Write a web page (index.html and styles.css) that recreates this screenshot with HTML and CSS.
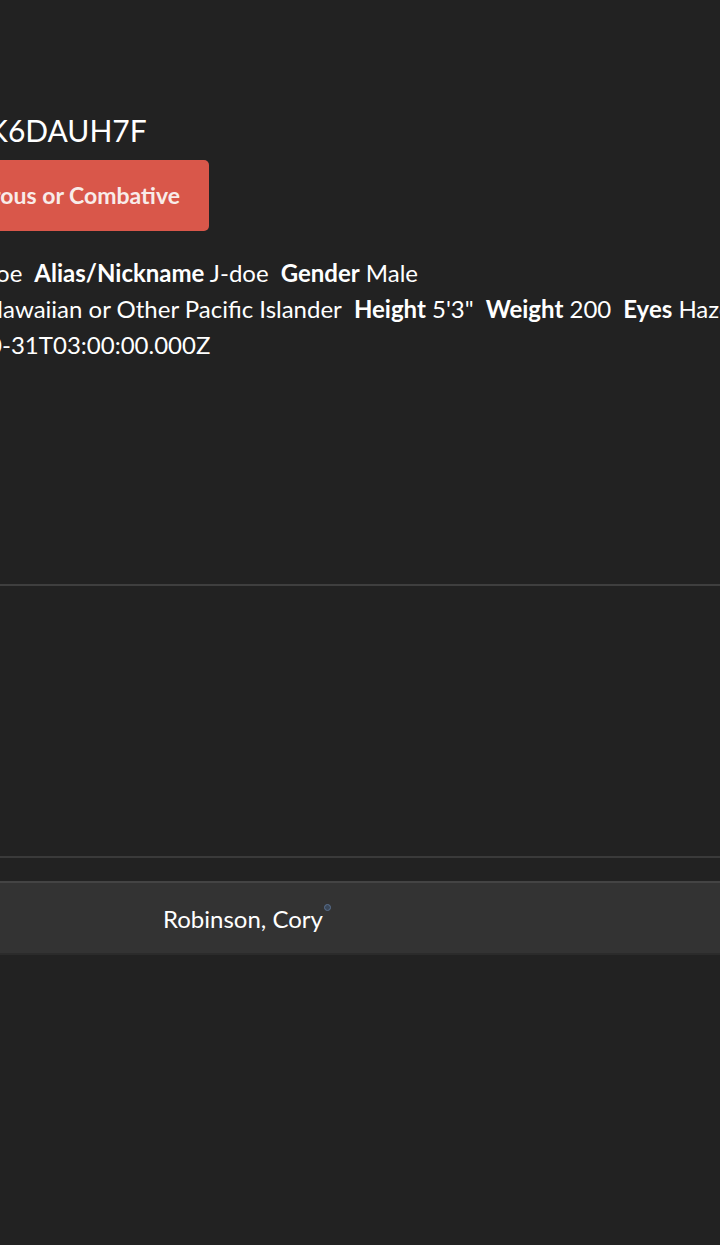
FILE: index.html
```html
<!DOCTYPE html>
<html>
<head>
<meta charset="utf-8">
<link rel="stylesheet" href="styles.css">
</head>
<body>
<div class="page">
  <section class="profile">
    <h1 class="title">K6DAUH7F</h1>
    <div class="badge-row"><span class="badge">Dangerous or Combative</span></div>
    <div class="details">
      <p class="line line1"><b>Name</b> John Doe<span class="sp"></span><b>Alias/Nickname</b> J-doe<span class="sp"></span><b>Gender</b> Male</p>
      <p class="line line2"><b>Race</b> Native Hawaiian or Other Pacific Islander<span class="sp"></span><b>Height</b> 5'3"<span class="sp"></span><b>Weight</b> 200<span class="sp"></span><b>Eyes</b> Hazel</p>
      <p class="line line3"><b>DOB</b> 1990-10-31T03:00:00.000Z</p>
    </div>
  </section>
  <section class="empty-panel"></section>
  <section class="list">
    <div class="list-row">
      <span class="name">Robinson, Cory<span class="dot"></span></span>
    </div>
  </section>
</div>
</body>
</html>
```
FILE: styles.css
```css
html, body {
  margin: 0;
  padding: 0;
  background: #222222;
}
body {
  font-family: Lato, "Open Sans", sans-serif;
  color: #ffffff;
  overflow: hidden;
  height: 1245px;
}
.page {
  display: flex;
  flex-direction: column;
}
.profile {
  height: 586px;
  border-bottom: 2px solid #3f3f3f;
  padding-top: 112px;
  box-sizing: border-box;
}
.title {
  margin: 0 0 0 -12px;
  font-size: 30px;
  font-weight: 400;
  line-height: 36px;
  white-space: nowrap;
}
.badge-row {
  margin-top: 12px;
  display: flex;
  margin-left: -103px;
}
.badge {
  display: inline-block;
  background: #d9574a;
  color: #f8ece9;
  font-weight: 700;
  font-size: 23px;
  line-height: 71px;
  padding: 0 29px;
  border-radius: 5px;
  white-space: nowrap;
}
.details {
  margin-top: 24px;
}
.line {
  margin: 0;
  font-size: 24px;
  line-height: 36px;
  white-space: nowrap;
}
.line1 { margin-left: -147px; }
.line2 { margin-left: -148px; }
.line3 { margin-left: -150px; }
.line b { font-weight: 700; }
.sp { display: inline-block; width: 12px; }
.empty-panel {
  height: 270px;
  border-bottom: 2px solid #3a3a3a;
}
.list {
  margin-top: 23px;
}
.list-row {
  background: #333333;
  border-top: 2px solid #444444;
  border-bottom: 2px solid #2b2b2b;
  height: 70px;
  display: flex;
  align-items: center;
  padding-left: 163px;
}
.name {
  position: relative;
  font-size: 24px;
}
.dot {
  position: absolute;
  right: -8px;
  top: 0;
  width: 5px;
  height: 5px;
  border-radius: 50%;
  border: 1px solid #5a7090;
  background: #3a4758;
}
```
